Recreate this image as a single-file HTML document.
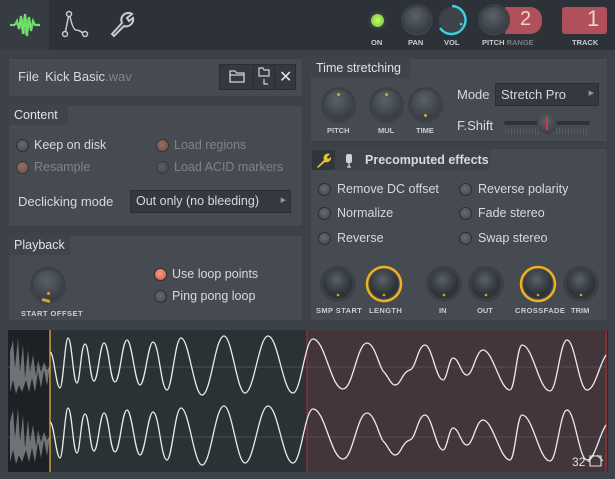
<!DOCTYPE html>
<html><head><meta charset="utf-8"><style>
*{box-sizing:border-box;margin:0;padding:0}
body{width:615px;height:479px;background:#3c4247;font-family:"Liberation Sans","DejaVu Sans",sans-serif;color:#d6dadd;position:relative;overflow:hidden;font-size:12.5px}
.a{position:absolute}
.panel{position:absolute;background:#454b51;border:1px solid #3a4045}
.hdr{position:absolute;font-size:12.5px;color:#dfe3e6;padding:3px 6px;background:#3e4449;height:20px;white-space:nowrap}
.knob{position:absolute;border-radius:50%;background:radial-gradient(circle at 45% 35%,#5a6168,#3a4045 70%,#2f3438);box-shadow:0 0 0 3px #3b4146,0 2px 3px rgba(0,0,0,.5)}
.dot{position:absolute;width:3px;height:3px;border-radius:50%;background:#e0a030}
.rad{position:absolute;width:13px;height:13px;border-radius:50%;background:radial-gradient(circle at 45% 40%,#666c71,#3e4449);border:1.5px solid #2a2f33}
.rad.o{background:radial-gradient(circle at 45% 40%,#b07a68,#7a4e40)}
.rad.on{background:radial-gradient(circle at 45% 40%,#ff9a80,#d05a40);border-color:#2a2f33}
.t{position:absolute;white-space:nowrap}
.dim{color:#7d8388}
.dd{position:absolute;background:#33393e;border:1px solid #2b3034;color:#d6dadd;padding:3px 5px;font-size:12.5px}
</style></head><body>
<div class="a" style="left:0;top:0;width:615px;height:50px;background:#2c3237"></div>
<div class="a" style="left:0;top:0;width:49px;height:50px;background:#363c41"></div>
<svg class="a" style="left:9px;top:12px" width="32" height="26" viewBox="0 0 32 26"><path d="M1 13 H6 M6 13 L8 9 L10 17 L12 4 L14 22 L16 2 L18 24 L20 5 L22 19 L24 9 L26 13 H31" stroke="#6fe06a" stroke-width="2.2" fill="none"/><path d="M10 13 L16 3 L22 13 L16 23Z" fill="#6fe06a" opacity=".6"/></svg>
<svg class="a" style="left:60px;top:10px" width="30" height="30" viewBox="0 0 30 30" fill="none" stroke="#c9cdd0" stroke-width="1.5"><circle cx="9" cy="4" r="2.5"/><circle cx="5" cy="24" r="2.5"/><circle cx="25" cy="24" r="2.5"/><path d="M8.5 6.5 L5.5 21.5 M10 6.5 Q13 20 16 20 Q19 20 23 23"/></svg>
<svg class="a" style="left:108px;top:10px" width="28" height="28" viewBox="0 0 28 28"><path d="M4 24 L14 13 A7 7 0 0 1 24 4 L19 8 L21 11 L25 8 A7 7 0 0 1 16 16 L6 26Z" fill="none" stroke="#c9cdd0" stroke-width="2"/></svg>
<div class="a" style="left:371px;top:14px;width:13px;height:13px;border-radius:50%;background:radial-gradient(circle,#c8ff6a,#6ec030);box-shadow:0 0 0 3px #353b40"></div>
<div class="t" style="left:371px;top:38px;font-size:7.5px;font-weight:bold;color:#c8cdd0">ON</div>
<div class="knob" style="left:404px;top:7px;width:26px;height:26px"></div>
<div class="t" style="left:408px;top:38px;font-size:7.5px;font-weight:bold;color:#c8cdd0">PAN</div>
<svg class="a" style="left:435px;top:3px" width="34" height="34"><circle cx="17" cy="17" r="14" fill="#353b40"/><circle cx="17" cy="17" r="12" fill="#3d4348"/><path d="M17 3 A14 14 0 1 1 5 25" stroke="#3ad0e0" stroke-width="2.5" fill="none"/><circle cx="26" cy="21" r="1.3" fill="#3ad0e0"/></svg>
<div class="t" style="left:444px;top:38px;font-size:7.5px;font-weight:bold;color:#c8cdd0">VOL</div>
<div class="a" style="left:505px;top:7px;width:37px;height:27px;background:#b0505a;border-radius:0 12px 12px 0"></div>
<div class="t" style="left:520px;top:8px;font-size:20px;color:#f0d0d0">2</div>
<div class="knob" style="left:481px;top:7px;width:26px;height:26px"></div>
<div class="t" style="left:482px;top:38px;font-size:7.5px;font-weight:bold;color:#c8cdd0">PITCH <span style="color:#777d82">RANGE</span></div>
<div class="a" style="left:562px;top:7px;width:45px;height:27px;background:#b0505a;border-radius:3px"></div>
<div class="t" style="left:587px;top:6px;font-size:22px;color:#f0d0d0">1</div>
<div class="t" style="left:572px;top:38px;font-size:7.5px;font-weight:bold;color:#c8cdd0">TRACK</div>

<div class="panel" style="left:8px;top:58px;width:295px;height:39px"></div>
<div class="t" style="left:18px;top:69px;font-size:13px">File</div>
<div class="t" style="left:45px;top:69px;font-size:13px">Kick Basic<span class="dim">.wav</span></div>
<div class="a" style="left:219px;top:64px;width:77px;height:26px;background:#33393e;border:1px solid #2a2f33"></div>
<svg class="a" style="left:229px;top:69px" width="16" height="14" fill="none" stroke="#d0d4d6" stroke-width="1.3"><path d="M1 2 H6 L7.5 4 H15 V13 H1Z M1 6 H15"/></svg>
<div class="a" style="left:253px;top:65px;width:1px;height:24px;background:#2a2f33"></div>
<svg class="a" style="left:258px;top:67px" width="14" height="20" fill="none" stroke="#d0d4d6" stroke-width="1.2"><path d="M1 1 H5 L6 3 H11 V9 H1Z M6 12 V17 H10"/></svg>
<div class="a" style="left:274px;top:65px;width:1px;height:24px;background:#2a2f33"></div>
<div class="t" style="left:279px;top:67px;font-size:16px;color:#e0e4e6">✕</div>

<div class="panel" style="left:8px;top:105px;width:295px;height:122px"></div>
<div class="hdr" style="left:8px;top:105px;width:60px">Content</div>
<div class="rad" style="left:16px;top:139px"></div><div class="t" style="left:34px;top:138px">Keep on disk</div>
<div class="rad o" style="left:16px;top:161px;opacity:.75"></div><div class="t dim" style="left:34px;top:160px">Resample</div>
<div class="rad o" style="left:156px;top:139px;opacity:.75"></div><div class="t dim" style="left:174px;top:138px">Load regions</div>
<div class="rad" style="left:156px;top:161px;opacity:.6"></div><div class="t dim" style="left:174px;top:160px">Load ACID markers</div>
<div class="t" style="left:18px;top:194px;font-size:13px">Declicking mode</div>
<div class="dd" style="left:130px;top:190px;width:161px;height:23px">Out only (no bleeding)<span style="position:absolute;right:4px;top:5px;font-size:7px;color:#999">▶</span></div>

<div class="panel" style="left:8px;top:235px;width:295px;height:86px"></div>
<div class="hdr" style="left:8px;top:235px;width:62px">Playback</div>
<div class="knob" style="left:33px;top:270px;width:30px;height:30px"></div>
<div class="dot" style="left:47px;top:292px"></div>
<div class="a" style="left:42px;top:299px;width:8px;height:3px;background:#e0a030;transform:rotate(15deg)"></div>
<div class="t" style="left:21px;top:309px;font-size:7.5px;font-weight:bold;letter-spacing:.5px;color:#c8cdd0">START OFFSET</div>
<div class="rad on" style="left:154px;top:268px"></div><div class="t" style="left:172px;top:267px">Use loop points</div>
<div class="rad" style="left:154px;top:290px"></div><div class="t" style="left:172px;top:289px">Ping pong loop</div>

<div class="panel" style="left:310px;top:58px;width:298px;height:84px"></div>
<div class="hdr" style="left:310px;top:58px;width:100px">Time stretching</div>
<div class="knob" style="left:324px;top:90px;width:29px;height:29px"></div><div class="dot" style="left:337px;top:93px"></div>
<div class="knob" style="left:372px;top:90px;width:29px;height:29px"></div><div class="dot" style="left:385px;top:93px"></div>
<div class="knob" style="left:411px;top:90px;width:29px;height:29px"></div><div class="dot" style="left:424px;top:114px"></div>
<div class="t" style="left:327px;top:126px;font-size:7.5px;font-weight:bold;color:#c8cdd0">PITCH</div>
<div class="t" style="left:378px;top:126px;font-size:7.5px;font-weight:bold;color:#c8cdd0">MUL</div>
<div class="t" style="left:416px;top:126px;font-size:7.5px;font-weight:bold;color:#c8cdd0">TIME</div>
<div class="t" style="left:457px;top:87px;font-size:13px">Mode</div>
<div class="dd" style="left:495px;top:83px;width:104px;height:23px;font-size:13px">Stretch Pro<span style="position:absolute;right:4px;top:5px;font-size:7px;color:#999">▶</span></div>
<div class="t" style="left:457px;top:118px;font-size:13px">F.Shift</div>
<div class="a" style="left:504px;top:121px;width:86px;height:4px;background:#2e3338;border-radius:2px"></div>
<div class="a" style="left:505px;top:128px;width:82px;height:6px;background:repeating-linear-gradient(90deg,#555b60 0 1px,transparent 1px 3px)"></div>
<div class="a" style="left:537px;top:114px;width:20px;height:20px;border-radius:50%;background:radial-gradient(circle at 45% 35%,#5a6168,#2f3438)"></div>
<div class="a" style="left:546px;top:117px;width:2px;height:13px;background:#c04050"></div>

<div class="panel" style="left:310px;top:148px;width:298px;height:173px"></div>
<div class="a" style="left:310px;top:148px;width:180px;height:22px;background:#3e4449"></div>
<div class="a" style="left:312px;top:150px;width:23px;height:20px;background:#30363a"></div>
<svg class="a" style="left:315px;top:152px" width="18" height="17"><path d="M2 15 L9 8 A4.5 4.5 0 0 1 15 2 L12 5 L13 7 L16 5 A4.5 4.5 0 0 1 10 10 L3 16Z" fill="#e8c030"/></svg>
<svg class="a" style="left:344px;top:152px" width="10" height="17"><rect x="2" y="2" width="6" height="9" rx="2" fill="#cfd3d6"/><path d="M5 11 V15 M3 15 H7" stroke="#cfd3d6" stroke-width="1.3"/></svg>
<div class="t" style="left:365px;top:153px;font-weight:bold;font-size:12.5px">Precomputed effects</div>
<div class="rad" style="left:318px;top:183px"></div><div class="t" style="left:337px;top:182px">Remove DC offset</div>
<div class="rad" style="left:318px;top:207px"></div><div class="t" style="left:337px;top:206px">Normalize</div>
<div class="rad" style="left:318px;top:232px"></div><div class="t" style="left:337px;top:231px">Reverse</div>
<div class="rad" style="left:459px;top:183px"></div><div class="t" style="left:478px;top:182px">Reverse polarity</div>
<div class="rad" style="left:459px;top:207px"></div><div class="t" style="left:478px;top:206px">Fade stereo</div>
<div class="rad" style="left:459px;top:232px"></div><div class="t" style="left:478px;top:231px">Swap stereo</div>
<svg class="a" style="left:310px;top:260px" width="298" height="50">
<g fill="#3a4045"><circle cx="28" cy="24" r="18"/><circle cx="134" cy="24" r="18"/><circle cx="176" cy="24" r="18"/><circle cx="271" cy="24" r="18"/></g>
<defs><radialGradient id="k" cx="45%" cy="35%"><stop offset="0" stop-color="#5a6168"/><stop offset=".7" stop-color="#3a4045"/><stop offset="1" stop-color="#2f3438"/></radialGradient></defs>
<g fill="url(#k)"><circle cx="28" cy="24" r="14.5"/><circle cx="74" cy="24" r="14.5"/><circle cx="134" cy="24" r="14.5"/><circle cx="176" cy="24" r="14.5"/><circle cx="228" cy="24" r="14.5"/><circle cx="271" cy="24" r="14.5"/></g>
<g fill="none" stroke="#f0b020" stroke-width="2.5"><circle cx="74" cy="24" r="17"/><circle cx="228" cy="24" r="17"/></g>
<g fill="#e0a030"><circle cx="28" cy="35" r="1.3"/><circle cx="74" cy="35" r="1.3"/><circle cx="134" cy="35" r="1.3"/><circle cx="176" cy="35" r="1.3"/><circle cx="228" cy="35" r="1.3"/><circle cx="271" cy="35" r="1.3"/></g>
</svg>
<div class="t" style="left:316px;top:306px;font-size:7.5px;font-weight:bold;letter-spacing:.4px;color:#c8cdd0">SMP START</div>
<div class="t" style="left:369px;top:306px;font-size:7.5px;font-weight:bold;letter-spacing:.4px;color:#c8cdd0">LENGTH</div>
<div class="t" style="left:439px;top:306px;font-size:7.5px;font-weight:bold;color:#c8cdd0">IN</div>
<div class="t" style="left:477px;top:306px;font-size:7.5px;font-weight:bold;color:#c8cdd0">OUT</div>
<div class="t" style="left:515px;top:306px;font-size:7.5px;font-weight:bold;letter-spacing:.4px;color:#c8cdd0">CROSSFADE</div>
<div class="t" style="left:571px;top:306px;font-size:7.5px;font-weight:bold;color:#c8cdd0">TRIM</div>

<svg class="a" style="left:0;top:0" width="615" height="479">
<rect x="8" y="330" width="600" height="142" fill="#262c30"/>
<rect x="8" y="330" width="42" height="142" fill="#1d2125"/>
<rect x="50" y="330" width="257" height="142" fill="#2b3236"/>
<rect x="307" y="330" width="300" height="142" fill="#433539"/>
<line x1="307" y1="330" x2="307" y2="472" stroke="#b03030"/>
<line x1="606" y1="330" x2="606" y2="472" stroke="#b03030"/>
<line x1="8" y1="367" x2="607" y2="367" stroke="#55595c" stroke-width=".7"/>
<line x1="8" y1="437" x2="607" y2="437" stroke="#55595c" stroke-width=".7"/>
<g fill="#6e7377">
<path d="M10 352 L13 340 L15 368 L18 338 L20 372 L23 345 L25 378 L28 350 L30 372 L33 355 L36 376 L38 360 L41 372 L44 362 L47 370 L50 366 L47 386 L44 370 L41 388 L38 372 L35 392 L32 378 L29 392 L26 380 L22 392 L19 385 L16 394 L13 380 L10 392Z"/>
<path d="M10 422 L13 410 L15 438 L18 408 L20 442 L23 415 L25 448 L28 420 L30 442 L33 425 L36 446 L38 430 L41 442 L44 432 L47 440 L50 436 L47 456 L44 440 L41 458 L38 442 L35 462 L32 448 L29 462 L26 450 L22 462 L19 455 L16 464 L13 450 L10 462Z"/>
</g>
<line x1="50" y1="330" x2="50" y2="472" stroke="#e8b030" stroke-width="1.3"/>
<g id="w" fill="none" stroke="#e8ecef" stroke-width="1.3">
<path d="M50 352 C54 352,56 388,60 388 C63 388,65 338,68 338 C72 338,73 383,77 383 C80 383,81 344,85 344 C89 344,90 381,94 381 C98 381,100 343,104 343 C109 343,110 382,115 382 C120 382,122 340,127 340 C132 340,135 385,140 385 C145 385,148 342,153 342 C159 342,161 390,167 390 C172 390,175 338,181 338 C189 338,194 395,202 395 C211 395,215 336,224 336 C232 336,237 393,245 393 C254 393,259 336,268 336 C278 336,283 393,293 393 C301 393,305 339,313 339 C325 339,331 389,343 389 C353 389,357 343,367 343 C375 343,380 370,384 372 C388 376,391 385,395 385 C401 385,402 372,410 370 C416 368,418 345,425 345 C432 345,436 380,443 380 C447 380,449 358,453 358 C459 358,461 375,467 375 C473 375,476 350,483 350 C493 350,500 390,510 390 C515 390,517 345,522 345 C533 345,539 391,550 391 C557 391,560 340,567 340 C575 340,579 390,587 390 C595 390,599 365,606 355"/>
</g>
<use href="#w" transform="translate(0,70)"/>
<text x="572" y="466" font-family="Liberation Sans" font-size="12" fill="#e0e4e6">32</text>
<path d="M590 456 H601 V466 H590Z M588 462 L594 455 M597 455 L603 461" fill="none" stroke="#e0e4e6" stroke-width="1.1"/>
</svg>
</body></html>
